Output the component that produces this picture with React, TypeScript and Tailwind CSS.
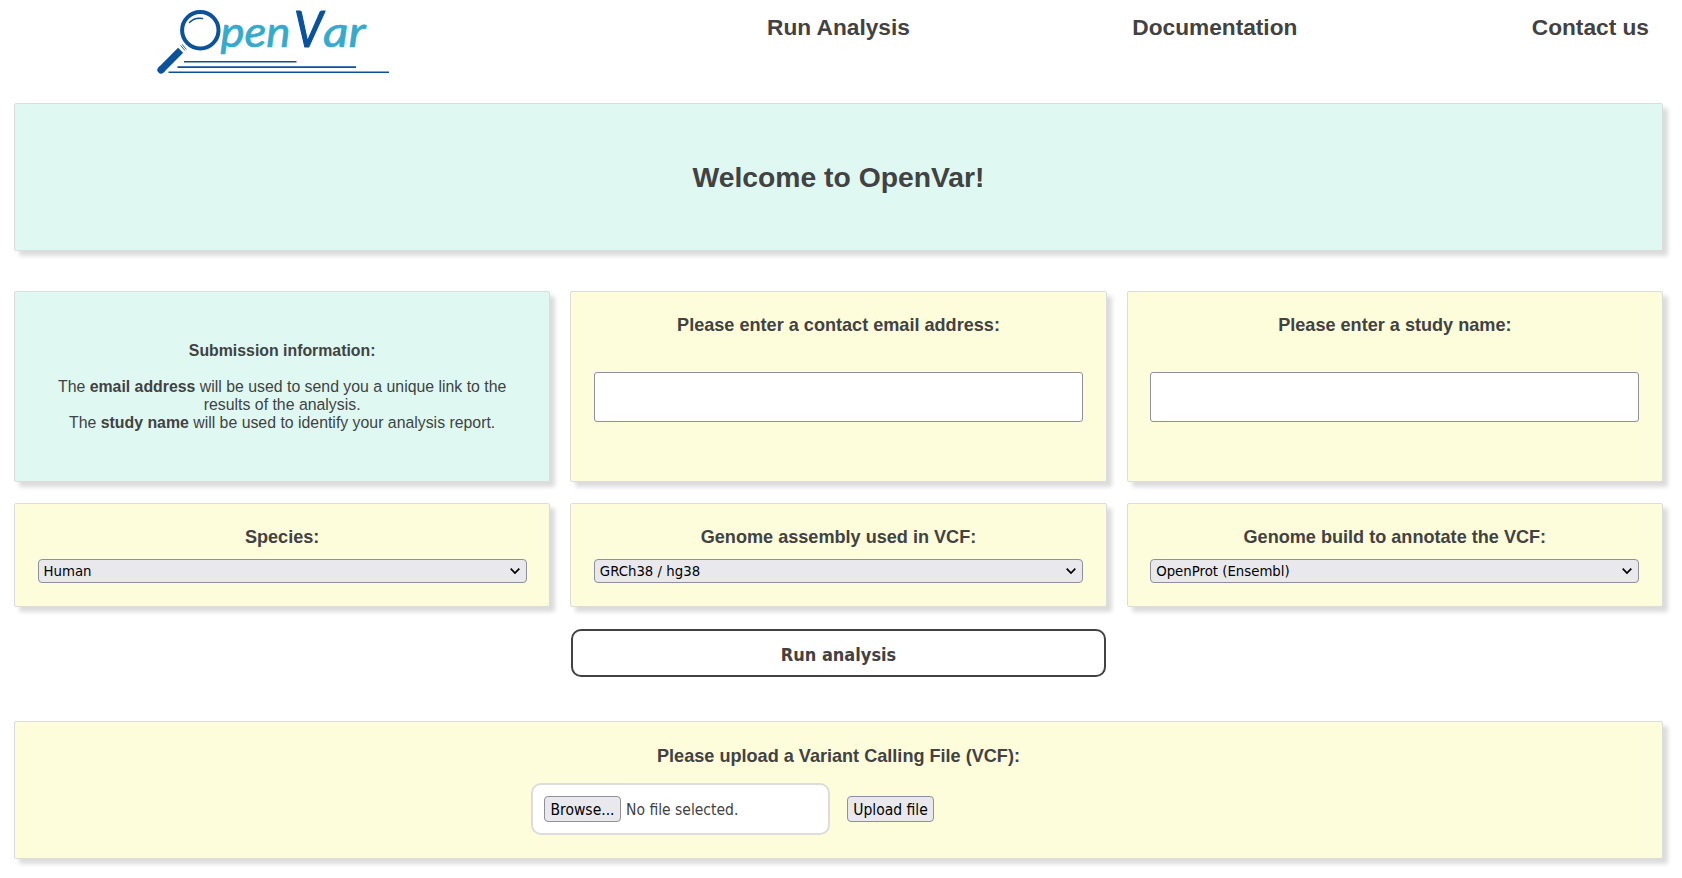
import type { ReactNode } from "react";

const ui = "font-['DejaVu_Sans_Condensed','DejaVu_Sans',sans-serif] [font-stretch:condensed]";

function Logo() {
  return (
    <svg className="block h-[80px] w-[240px]" viewBox="152 0 240 80" role="img" aria-label="OpenVar">
      <g stroke="#0a529c" fill="none">
        <path d="M184 61.8H296.5M177.5 67.1H356M168.5 72.3H389" strokeWidth="1.6" />
        <circle cx="200.3" cy="30.3" r="18.2" strokeWidth="4" />
        <path d="M189.5 22.5C193 19 197.500 17.700 202.500 18.600" strokeWidth="1.500" strokeLinecap="round" />
        <path d="M180.700 45.500L185 50.500M182 44.300L186.300 49.300" strokeWidth="0.900" />
        <path d="M180.600 50.300L161 70" strokeWidth="7.200" />
        <path d="M161.500 69.500L161 70" strokeWidth="7.200" strokeLinecap="round" />
      </g>
      <g fontFamily="Lato, sans-serif" fontStyle="italic" strokeLinejoin="round" strokeLinecap="round">
        <text x="220.500" y="46.500" fontSize="43" textLength="70" lengthAdjust="spacingAndGlyphs" fill="#35aacd" stroke="#35aacd" strokeWidth="0.700">pen</text>
        <text x="294" y="47" fontSize="51" textLength="29" lengthAdjust="spacingAndGlyphs" fill="#0a529c" stroke="#0a529c" strokeWidth="1.200">V</text>
        <text x="323" y="46.500" fontSize="43" textLength="42.500" lengthAdjust="spacingAndGlyphs" fill="#35aacd" stroke="#35aacd" strokeWidth="0.700">ar</text>
      </g>
    </svg>
  );
}

function Card({ className, children }: { className: string; children: ReactNode }) {
  return (
    <section className={`rounded-[2px] border border-[#dcdcdc] shadow-[5px_5px_4px_#dcdcdc] ${className}`}>
      {children}
    </section>
  );
}

function Title({ children }: { children: ReactNode }) {
  return <h3 className="text-center text-[18.100px] leading-[22px] font-bold">{children}</h3>;
}

function InputCard({ label }: { label: string }) {
  return (
    <Card className="bg-[#fdfddb] px-[22.500px] pt-[22px]">
      <Title>{label}</Title>
      <input aria-label={label} className="mt-[36px] block h-[50px] w-full rounded-[3px] border border-[#8f8f9d] bg-white px-2" />
    </Card>
  );
}

function SelectCard({ label, value }: { label: string; value: string }) {
  return (
    <Card className="bg-[#fdfddb] px-[22.500px] pt-[22px]">
      <Title>{label}</Title>
      <button className={`mt-[11px] flex h-[24px] w-full items-center justify-between rounded-[4px] border border-[#8f8f9d] bg-[#e9e9ed] pr-[6px] pl-[5px] text-[14.800px] leading-none text-black ${ui}`}>
        <span className="pt-px">{value}</span>
        <svg className="h-[10px] w-[10px]" viewBox="0 0 10 10" fill="none" stroke="black" strokeWidth="1.700">
          <path d="M0.700 2.700L5 7L9.300 2.700" />
        </svg>
      </button>
    </Card>
  );
}

export default function App() {
  return (
    <div className="h-[878px] overflow-hidden bg-white font-['Liberation_Sans',Arial,sans-serif] text-[#424242]">
      <header className="flex h-[103px] items-start pr-[33px] pl-[152px]">
        <Logo />
        <nav className="ml-[375px] flex flex-1 justify-between pt-[13px] text-[22.700px] leading-7 font-bold">
          <a>Run Analysis</a>
          <a className="mr-[12px]">Documentation</a>
          <a>Contact us</a>
        </nav>
      </header>
      <main className="mr-[19px] ml-[14px]">
        <Card className="flex h-[148px] items-center justify-center bg-[#dff9f2]">
          <h1 className="text-[28.300px] leading-8 font-bold">Welcome to OpenVar!</h1>
        </Card>
        <div className="mt-[40px] grid grid-cols-3 grid-rows-[191px_104px] gap-x-[20px] gap-y-[21px]">
          <Card className="bg-[#dff9f2] px-[40px] pt-[50px] text-center text-[15.850px] leading-[18px]">
            <h4 className="font-bold">Submission information:</h4>
            <p className="mt-[18px]">
              The <b>email address</b> will be used to send you a unique link to the results of the analysis.
              <br />
              The <b>study name</b> will be used to identify your analysis report.
            </p>
          </Card>
          <InputCard label="Please enter a contact email address:" />
          <InputCard label="Please enter a study name:" />
          <SelectCard label="Species:" value="Human" />
          <SelectCard label="Genome assembly used in VCF:" value="GRCh38 / hg38" />
          <SelectCard label="Genome build to annotate the VCF:" value="OpenProt (Ensembl)" />
        </div>
        <button className={`mx-auto mt-[22px] block h-[48px] w-[535px] rounded-[10px] border-2 border-[#424242] bg-white pt-[2px] text-[18px] font-bold ${ui}`}>
          Run analysis
        </button>
        <Card className="mt-[44px] h-[138px] bg-[#fdfddb] pt-[23px]">
          <Title>Please upload a Variant Calling File (VCF):</Title>
          <div className={`mt-[16px] ml-[516px] flex items-center text-[15.500px] leading-none ${ui}`}>
            <div className="flex h-[52px] w-[299px] items-center rounded-[10px] border-2 border-[#dcdcdc] bg-white pl-[11px]">
              <button className="h-[26px] w-[77px] rounded-[4px] border border-[#8f8f9d] bg-[#e9e9ed] pt-[3px] text-black">Browse...</button>
              <span className="ml-[5px] pt-[3px]">No file selected.</span>
            </div>
            <button className="ml-[17px] h-[26px] w-[87px] rounded-[4px] border border-[#8f8f9d] bg-[#e9e9ed] pt-[3px] whitespace-nowrap text-black">Upload file</button>
          </div>
        </Card>
      </main>
    </div>
  );
}
